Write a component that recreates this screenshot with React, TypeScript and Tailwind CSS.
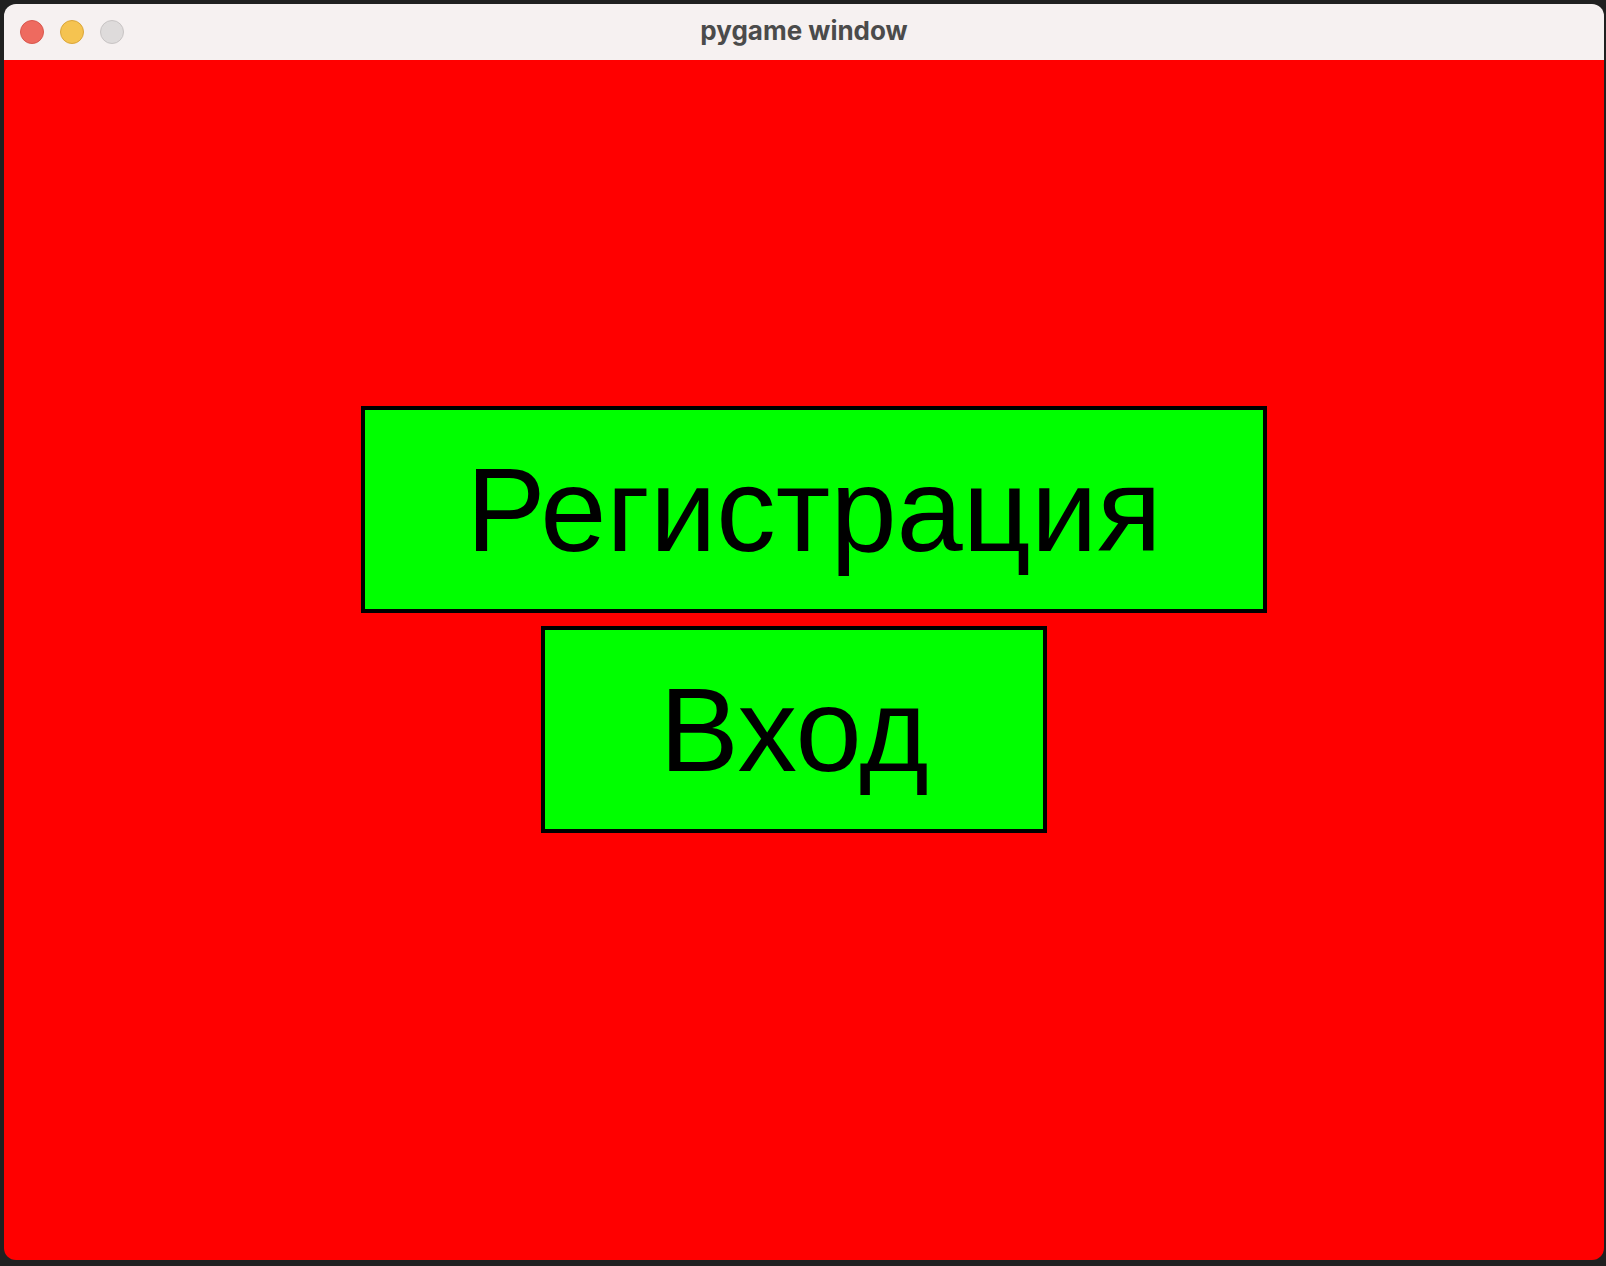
export default function App() {
    return (
        <div className="w-[1606px] h-[1266px] bg-[#202020] pt-[4px] pl-[4px] overflow-hidden">
            {/* Window */}
            <div className="w-[1600px] h-[1256px] rounded-[12px] overflow-hidden flex flex-col">
                {/* Title bar */}
                <div className="relative h-[56px] bg-[#f6f1f1] flex items-center justify-center">
                    <div className="absolute left-[16px] top-[16px] flex gap-[16px]">
                        <span className="w-[24px] h-[24px] rounded-full bg-[#ee6a5f] border border-[#d9574d]"/>
                        <span className="w-[24px] h-[24px] rounded-full bg-[#f5c350] border border-[#dba63a]"/>
                        <span className="w-[24px] h-[24px] rounded-full bg-[#dedbdb] border border-[#c8c4c4]"/>
                    </div>
                    <span className="font-['Inter',sans-serif] font-bold text-[26px] text-[#4b4b4b] -mt-[3px]">
                        pygame window
                    </span>
                </div>

                {/* Game surface */}
                <div className="flex-1 bg-[#ff0000] flex flex-col pt-[346px] font-['Liberation_Sans',Arial,sans-serif] text-black">
                    <div className="ml-[357px] w-[906px] h-[207px] border-[4px] border-black bg-[#00ff00] flex items-center justify-center">
                        <span className="text-[119px] leading-none">Регистрация</span>
                    </div>
                    <div className="ml-[537px] mt-[13px] w-[506px] h-[207px] border-[4px] border-black bg-[#00ff00] flex items-center justify-center">
                        <span className="text-[119px] leading-none">Вход</span>
                    </div>
                </div>
            </div>
        </div>
    )
}
